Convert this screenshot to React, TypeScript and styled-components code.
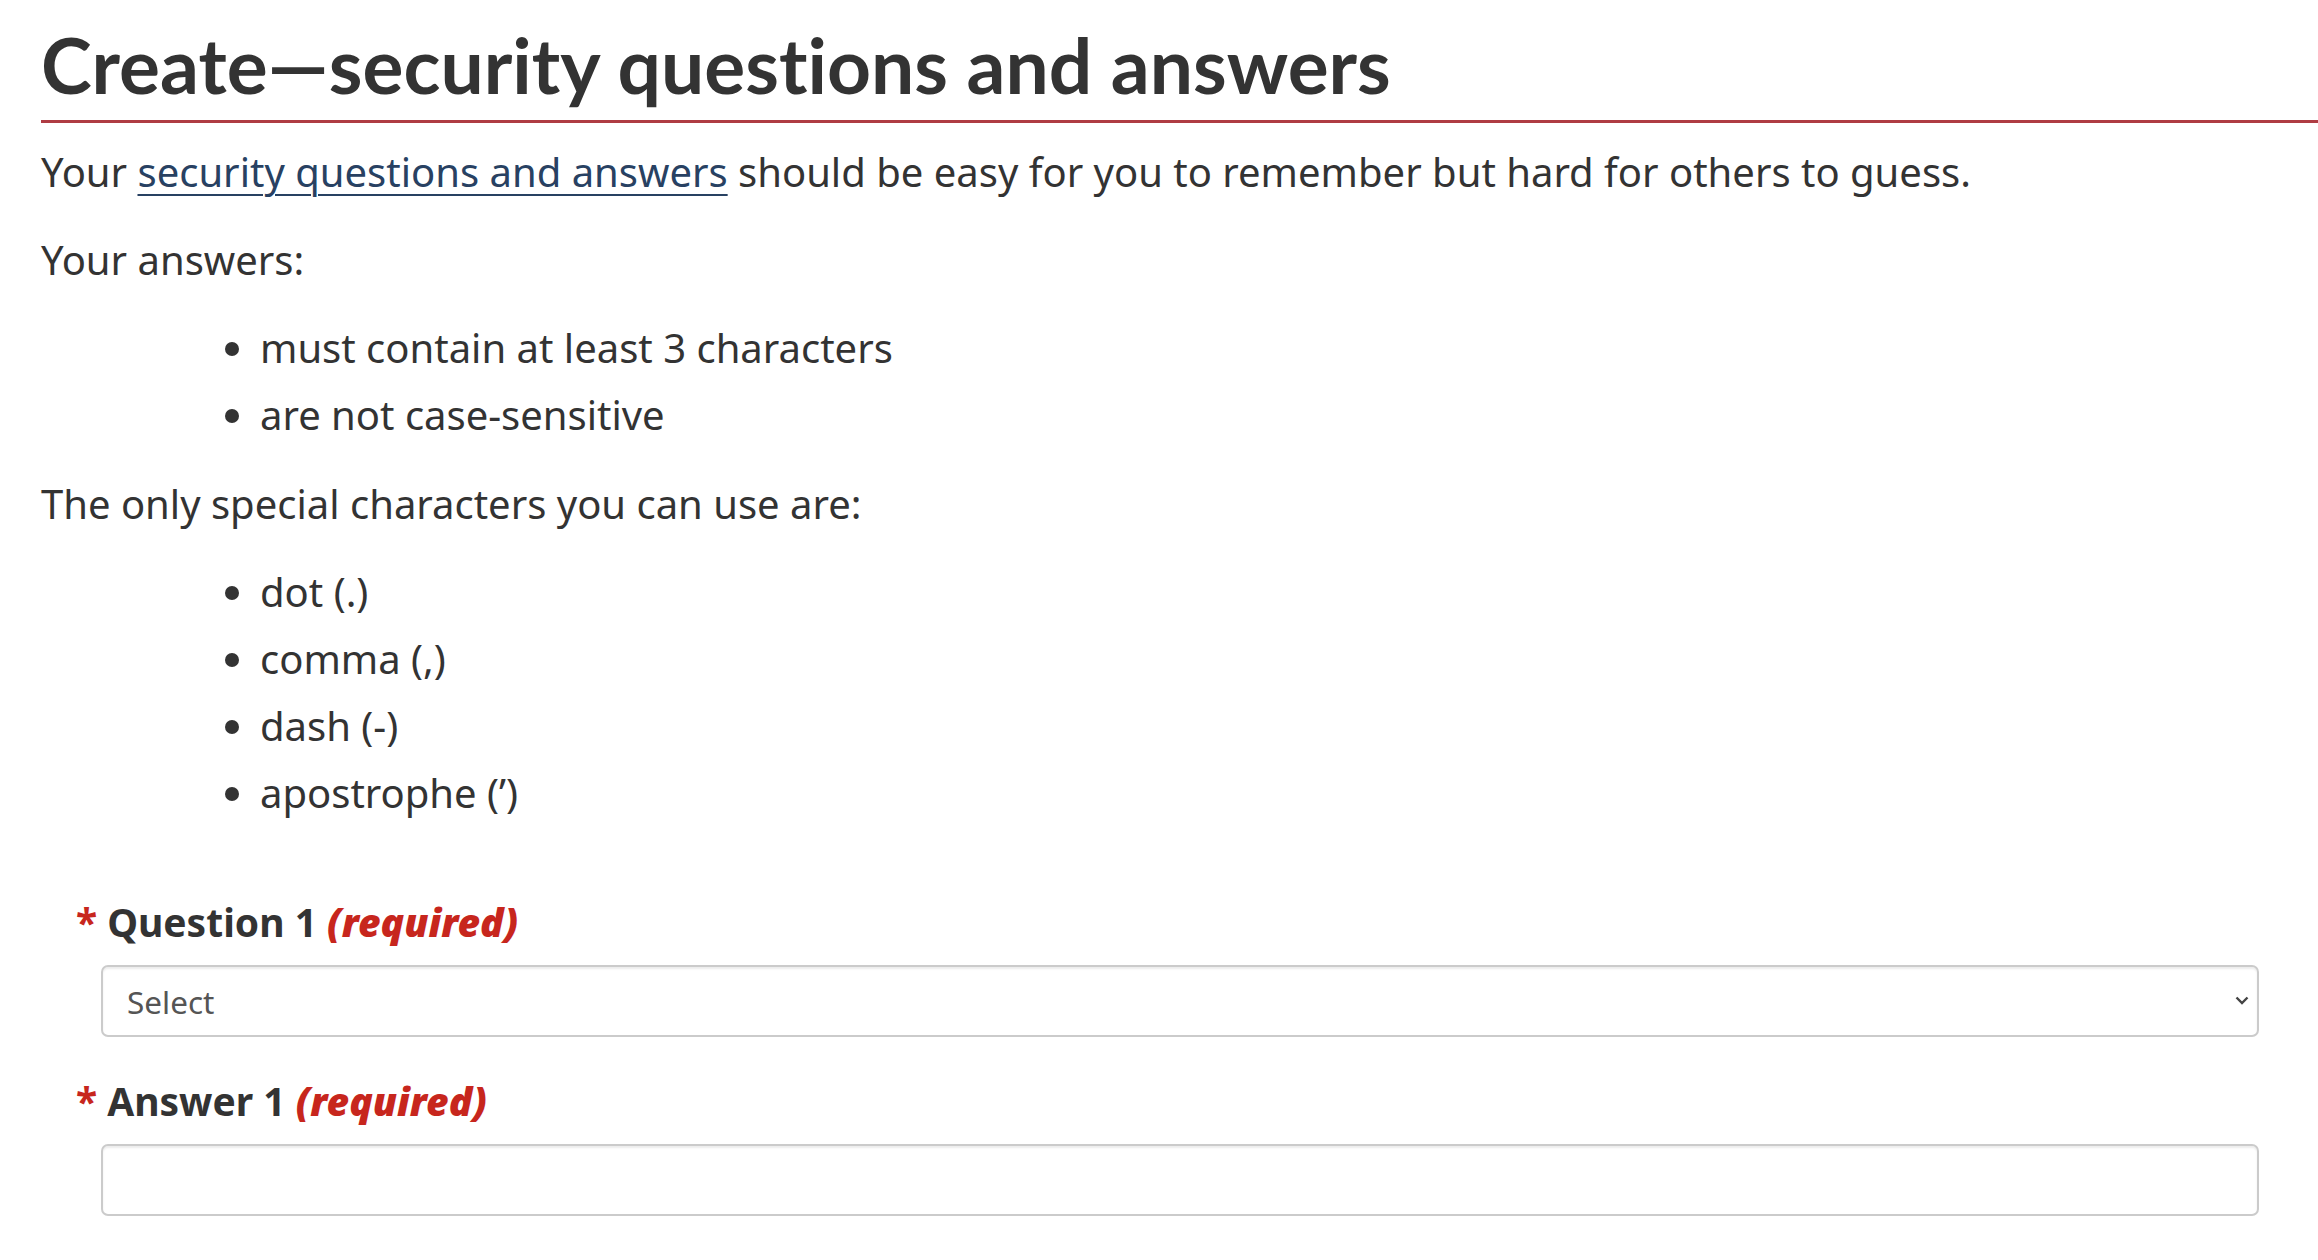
import styled, { createGlobalStyle } from 'styled-components';

const GlobalStyle = createGlobalStyle`
  html, body {
    margin: 0;
    padding: 0;
    background: #fff;
  }
  body {
    font-family: "Noto Sans", "Liberation Sans", sans-serif;
    color: #333;
  }
`;

const Page = styled.main`
  padding: 17px 0 0 41px;
`;

const Title = styled.h1`
  margin: 0 0 20px;
  padding-bottom: 9px;
  border-bottom: 3px solid #af3c43;
  font-family: Lato, "Noto Sans", sans-serif;
  font-weight: 700;
  font-size: 76.7px;
  line-height: 94px;
  font-variant-ligatures: none;
  color: #333;
`;

const Text = styled.p`
  margin: 0 0 30px;
  font-size: 40px;
  line-height: 58px;
`;

const TextLink = styled.a`
  color: #284162;
  text-decoration: underline;
  text-decoration-thickness: 2px;
  text-underline-offset: 7px;
`;

const List = styled.ul`
  margin: 2px 0 31px;
  padding-left: 219px;
  list-style: disc;
`;

const Item = styled.li`
  margin-bottom: 9px;
  font-size: 40px;
  line-height: 58px;
`;

const Form = styled.form`
  margin-top: 75px;
  padding: 0 59px 40px 35px;
`;

const Field = styled.div`
  margin-bottom: 39px;
`;

const Label = styled.label`
  display: block;
  margin-bottom: 18px;
  font-size: 39px;
  line-height: 50px;
  font-weight: 700;
  color: #333;
`;

const Star = styled.span`
  color: #c7261d;
  margin-right: 10px;
`;

const Required = styled.strong`
  font-style: italic;
  color: #c7261d;
`;

const Control = styled.div`
  position: relative;
  margin-left: 25px;
`;

const Select = styled.select`
  appearance: none;
  -webkit-appearance: none;
  box-sizing: border-box;
  width: 100%;
  height: 72px;
  padding: 0 60px 0 24px;
  border: 2px solid #cbcbcb;
  border-radius: 7px;
  background: #fff;
  box-shadow: inset 0 2px 2px rgba(0, 0, 0, 0.075);
  font-family: "Noto Sans", "Liberation Sans", sans-serif;
  font-size: 31.5px;
  color: #555;
`;

const Input = styled.input`
  box-sizing: border-box;
  display: block;
  width: 100%;
  height: 72px;
  padding: 0 24px;
  border: 2px solid #cbcbcb;
  border-radius: 7px;
  background: #fff;
  box-shadow: inset 0 2px 2px rgba(0, 0, 0, 0.075);
  font-family: "Noto Sans", "Liberation Sans", sans-serif;
  font-size: 31.5px;
  color: #555;
  outline: none;
`;

const Chevron = styled.svg`
  position: absolute;
  right: 10px;
  top: 50%;
  margin-top: -5px;
  width: 14px;
  height: 9px;
  pointer-events: none;
`;

const RequiredLabel = ({ htmlFor, text }: { htmlFor: string; text: string }) => (
  <Label htmlFor={htmlFor}>
    <Star>*</Star>
    {text} <Required>(required)</Required>
  </Label>
);

const App = () => {
  return (
    <>
      <GlobalStyle />
      <Page>
        <Title>Create—security questions and answers</Title>
        <Text>
          Your <TextLink href="#">security questions and answers</TextLink> should be easy for
          you to remember but hard for others to guess.
        </Text>
        <Text>Your answers:</Text>
        <List>
          <Item>must contain at least 3 characters</Item>
          <Item>are not case-sensitive</Item>
        </List>
        <Text>The only special characters you can use are:</Text>
        <List>
          <Item>dot (.)</Item>
          <Item>comma (,)</Item>
          <Item>dash (-)</Item>
          <Item>apostrophe (’)</Item>
        </List>
        <Form onSubmit={(e) => e.preventDefault()}>
          <Field>
            <RequiredLabel htmlFor="q1" text="Question 1" />
            <Control>
              <Select id="q1" defaultValue="">
                <option value="">Select</option>
              </Select>
              <Chevron viewBox="0 0 14 9">
                <path d="M1.5 1.5 7 7l5.5-5.5" fill="none" stroke="#444" strokeWidth="2.4" />
              </Chevron>
            </Control>
          </Field>
          <Field>
            <RequiredLabel htmlFor="a1" text="Answer 1" />
            <Control>
              <Input id="a1" type="text" />
            </Control>
          </Field>
        </Form>
      </Page>
    </>
  );
};

export default App;
